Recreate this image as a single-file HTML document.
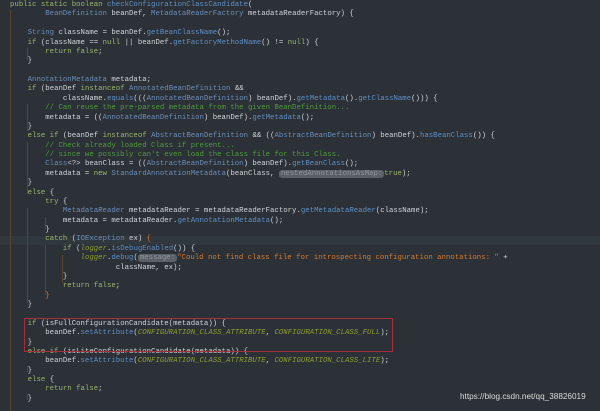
<!DOCTYPE html>
<html><head><style>
body{margin:0;width:600px;height:411px;background:#2b3137;overflow:hidden;position:relative}
pre{position:absolute;left:10px;top:1px;margin:0;font-family:"Liberation Mono",monospace;font-size:7.35px;line-height:9.38px;color:#d0d3d6;white-space:pre}
.k{color:#9cb56c}.t{color:#6b8db8}.m{color:#5f8fc4}.c{color:#4f9a3e}.s{color:#d47b2e}.i{color:#8e9e2c;font-style:italic}.l{color:#8e9e2c;font-style:italic}
.h{background:#5a6066;color:#8e959b;border-radius:3px;padding:0 2px}
.g{position:absolute;width:1px;background:#5c4530}
.box{position:absolute;left:24px;top:318px;width:367px;height:32px;border:1px solid #a3303a}
.wm{position:absolute;left:460px;top:392px;font-family:"Liberation Sans",sans-serif;font-size:8.2px;color:#dcdcdc}
.hl{position:absolute;left:0;top:235.5px;width:600px;height:9.4px;background:#30373d}
</style></head><body>
<div class="hl"></div>
<div class="g" style="left:10px;top:10px;height:401px"></div>
<div class="g" style="left:27px;top:48px;height:12px"></div>
<div class="g" style="left:27px;top:104px;height:27px"></div>
<div class="g" style="left:27px;top:142px;height:52px"></div>
<div class="g" style="left:27px;top:208px;height:95px"></div>
<div class="g" style="left:45px;top:217px;height:12px"></div>
<div class="g" style="left:45px;top:245px;height:50px"></div>
<div class="g" style="left:62px;top:255px;height:28px"></div>
<div class="g" style="left:27px;top:366px;height:6px"></div>
<div class="g" style="left:27px;top:394px;height:6px"></div>
<pre><span class="k">public static boolean</span> <span class="m">checkConfigurationClassCandidate</span>(
        <span class="t">BeanDefinition</span> beanDef, <span class="t">MetadataReaderFactory</span> metadataReaderFactory) {

    <span class="t">String</span> className = beanDef.<span class="m">getBeanClassName</span>();
    <span class="k">if</span> (className == <span class="k">null</span> || beanDef.<span class="m">getFactoryMethodName</span>() != <span class="k">null</span>) {
        <span class="k">return false</span>;
    }

    <span class="t">AnnotationMetadata</span> metadata;
    <span class="k">if</span> (beanDef <span class="k">instanceof</span> <span class="t">AnnotatedBeanDefinition</span> &amp;&amp;
            className.<span class="m">equals</span>(((<span class="t">AnnotatedBeanDefinition</span>) beanDef).<span class="m">getMetadata</span>().<span class="m">getClassName</span>())) {
        <span class="c">// Can reuse the pre-parsed metadata from the given BeanDefinition...</span>
        metadata = ((<span class="t">AnnotatedBeanDefinition</span>) beanDef).<span class="m">getMetadata</span>();
    }
    <span class="k">else if</span> (beanDef <span class="k">instanceof</span> <span class="t">AbstractBeanDefinition</span> &amp;&amp; ((<span class="t">AbstractBeanDefinition</span>) beanDef).<span class="m">hasBeanClass</span>()) {
        <span class="c">// Check already loaded Class if present...</span>
        <span class="c">// since we possibly can't even load the class file for this Class.</span>
        <span class="t">Class</span>&lt;?&gt; beanClass = ((<span class="t">AbstractBeanDefinition</span>) beanDef).<span class="m">getBeanClass</span>();
        metadata = <span class="k">new</span> <span class="t">StandardAnnotationMetadata</span>(beanClass, <span class="h">nestedAnnotationsAsMap:</span><span class="k">true</span>);
    }
    <span class="k">else</span> {
        <span class="k">try</span> {
            <span class="t">MetadataReader</span> metadataReader = metadataReaderFactory.<span class="m">getMetadataReader</span>(className);
            metadata = metadataReader.<span class="m">getAnnotationMetadata</span>();
        }
        <span class="k">catch</span> (<span class="t">IOException</span> ex) <span class="s">{</span>
            <span class="k">if</span> (<span class="l">logger</span>.<span class="m">isDebugEnabled</span>()) {
                <span class="l">logger</span>.<span class="m">debug</span>(<span class="h">message:</span><span class="s">"Could not find class file for introspecting configuration annotations: "</span> +
                        className, ex);
            }
            <span class="k">return false</span>;
        <span class="s">}</span>
    }

    <span class="k">if</span> (isFullConfigurationCandidate(metadata)) {
        beanDef.<span class="m">setAttribute</span>(<span class="i">CONFIGURATION_CLASS_ATTRIBUTE</span>, <span class="i">CONFIGURATION_CLASS_FULL</span>);
    }
    <span class="k">else if</span> (isLiteConfigurationCandidate(metadata)) {
        beanDef.<span class="m">setAttribute</span>(<span class="i">CONFIGURATION_CLASS_ATTRIBUTE</span>, <span class="i">CONFIGURATION_CLASS_LITE</span>);
    }
    <span class="k">else</span> {
        <span class="k">return false</span>;
    }</pre>
<div class="box"></div>
<div class="wm">https://blog.csdn.net/qq_38826019</div>
</body></html>
